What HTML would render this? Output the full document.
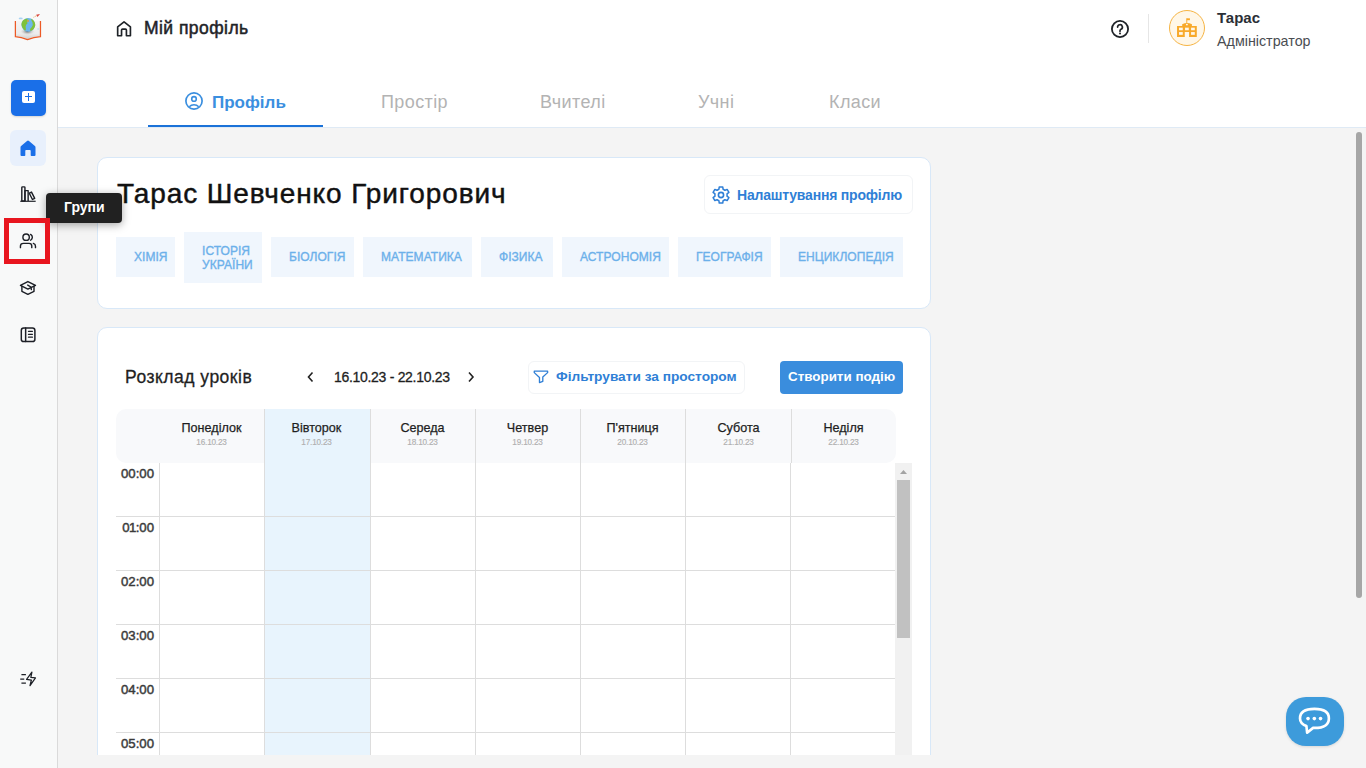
<!DOCTYPE html>
<html><head><meta charset="utf-8">
<style>
*{box-sizing:border-box;margin:0;padding:0}
html,body{width:1366px;height:768px;overflow:hidden}
body{font-family:"Liberation Sans",sans-serif;background:#f4f4f4;position:relative;color:#1f2328}
.a{position:absolute}
.t{position:absolute;white-space:nowrap;line-height:1}
#side{left:0;top:0;width:58px;height:768px;background:#f8f9f9;border-right:1px solid #dadada}
#hdr{left:58px;top:0;width:1308px;height:128px;background:#fff;border-bottom:1px solid #dfeaf5}
.card{background:#fff;border:1px solid #d8e8f8;border-radius:10px}
.tag{position:absolute;background:#f0f6fd;color:#6cb0ea;font-size:12px;letter-spacing:0.05px;font-weight:normal;-webkit-text-stroke:0.35px #6cb0ea;text-transform:uppercase;line-height:14px;padding-left:18px}
.tag span{position:absolute;left:18px;top:50%;transform:translateY(-50%);white-space:nowrap}
.dn{position:absolute;top:422px;font-size:12.6px;-webkit-text-stroke:0.25px #1f1f1f;color:#1f1f1f;line-height:1;text-align:center;width:105px}
.dd{position:absolute;top:439px;font-size:8.2px;-webkit-text-stroke:0.15px #b0b0b0;color:#b0b0b0;line-height:1;text-align:center;width:105px;letter-spacing:-0.2px}
.vl{position:absolute;width:1px;background:#dddddd}
.hl{position:absolute;height:1px;background:#dddddd}
.tm{position:absolute;font-size:13.2px;font-weight:normal;-webkit-text-stroke:0.45px #3a3a3a;color:#3a3a3a;line-height:1;text-align:right;width:60px}
svg{position:absolute;overflow:visible}
</style></head><body>

<!-- sidebar -->
<div id="side" class="a"></div>
<!-- logo -->
<svg style="left:0;top:0" width="60" height="60" viewBox="0 0 768 768">
  <defs><radialGradient id="sh" cx="50%" cy="40%" r="50%"><stop offset="0" stop-color="#666"/><stop offset="1" stop-color="#ddd" stop-opacity="0"/></radialGradient>
  <linearGradient id="pg" x1="0" y1="0" x2="0" y2="1"><stop offset="0" stop-color="#f4f4f4"/><stop offset=".7" stop-color="#ececec"/><stop offset="1" stop-color="#cfcfcf"/></linearGradient></defs>
  <path d="M203 272 L203 462 Q280 468 352 500 Q430 468 512 462 L512 272 Q430 262 352 290 Q280 262 203 272Z" fill="url(#pg)"/>
  <path d="M197 270 L197 470 Q275 478 352 508 Q430 478 518 470 L518 270" fill="none" stroke="#ec5a26" stroke-width="16"/>
  <ellipse cx="352" cy="412" rx="95" ry="48" fill="url(#sh)"/>
  <circle cx="362" cy="318" r="88" fill="#6cb6ec"/>
  <path d="M292 262 Q325 238 355 236 Q338 270 352 300 Q322 318 330 360 Q340 385 320 392 Q282 365 275 320 Q275 285 292 262Z" fill="#7fc23b"/>
  <path d="M398 240 Q448 262 452 322 Q440 378 392 396 Q372 380 405 350 Q430 320 415 285 Q398 262 398 240Z" fill="#7fc23b"/>
  <circle cx="358" cy="268" r="14" fill="#e0a030" opacity=".8"/>
  <path d="M462 190 L512 180 L480 218Z" fill="#d9453a"/>
  <path d="M428 222 L470 200" stroke="#f0b070" stroke-width="12" stroke-dasharray="14 8"/>
  <ellipse cx="265" cy="236" rx="26" ry="11" fill="#a8d4f3"/>
  <circle cx="488" cy="370" r="12" fill="#bfe0f7"/>
</svg>
<!-- add button -->
<div class="a" style="left:11px;top:80px;width:35px;height:36px;border-radius:5px;background:#1a6fe8;box-shadow:0 1px 2px rgba(0,0,0,.15)"></div>
<div class="a" style="left:22px;top:90.5px;width:12.5px;height:12.5px;border-radius:2px;background:#fff"></div>
<div class="a" style="left:27.6px;top:93px;width:1.4px;height:7.5px;background:#1a6fe8"></div>
<div class="a" style="left:24.5px;top:96.05px;width:7.5px;height:1.4px;background:#1a6fe8"></div>
<!-- home active -->
<div class="a" style="left:10px;top:130px;width:36px;height:36px;border-radius:6px;background:#e8f0fc"></div>
<svg style="left:20px;top:140px" width="16" height="16" viewBox="0 0 16 16"><path d="M0.5 7.4 Q0.5 6.6 1.1 6.1 L7 1 Q8 0.2 9 1 L14.9 6.1 Q15.5 6.6 15.5 7.4 L15.5 15 Q15.5 16 14.5 16 L11.5 16 Q10.7 16 10.7 15.2 L10.7 10.8 Q10.7 10 9.9 10 L6.1 10 Q5.3 10 5.3 10.8 L5.3 15.2 Q5.3 16 4.5 16 L1.5 16 Q0.5 16 0.5 15Z" fill="#1a6fe8"/></svg>
<!-- library -->
<svg style="left:14px;top:178px" width="30" height="30" viewBox="0 0 768 768" fill="none" stroke="#1c1f26" stroke-width="36" stroke-linejoin="round">
  <path d="M200 590 L200 245 Q200 228 218 228 L262 228 Q280 228 280 245 L280 590Z"/>
  <path d="M280 590 L280 322 L362 322 L362 590"/>
  <path d="M392 390 L448 360 L530 520 L472 550Z"/>
  <path d="M160 596 L555 596" stroke-width="30"/>
</svg>
<!-- users -->
<svg style="left:14px;top:225px" width="30" height="30" viewBox="0 0 768 768" fill="none" stroke="#1c1f26" stroke-width="36" stroke-linecap="round">
  <circle cx="310" cy="312" r="82"/>
  <path d="M425 240 Q470 270 470 315 Q470 360 425 390"/>
  <path d="M165 580 L165 540 Q165 470 240 470 L385 470 Q455 470 455 540 L455 580"/>
  <path d="M495 470 Q550 490 550 545 L550 580"/>
</svg>
<!-- grad cap -->
<svg style="left:14px;top:273px" width="30" height="30" viewBox="0 0 768 768" fill="none" stroke="#1c1f26" stroke-width="36" stroke-linejoin="round" stroke-linecap="round">
  <path d="M165 318 L355 218 L550 318 L355 412Z"/>
  <path d="M202 345 L202 470 L355 545 L512 470 L512 345"/>
  <path d="M352 310 L432 358 L445 425"/>
</svg>
<!-- book list -->
<svg style="left:14px;top:320px" width="30" height="30" viewBox="0 0 768 768" fill="none" stroke="#1c1f26" stroke-width="38" stroke-linecap="round">
  <rect x="187" y="207" width="348" height="345" rx="62"/>
  <path d="M298 207 L298 552"/>
  <path d="M370 290 L472 290 M370 365 L472 365 M370 440 L472 440" stroke-width="32"/>
</svg>
<!-- lightning -->
<svg style="left:14px;top:664px" width="30" height="30" viewBox="0 0 768 768" fill="none" stroke="#1c1f26" stroke-width="32" stroke-linejoin="round">
  <path d="M190 270 L305 270 M160 385 L262 385 M190 490 L305 490"/>
  <path d="M458 210 L322 395 L445 410 L410 552 L550 358 L432 345Z"/>
</svg>

<!-- header -->
<div id="hdr" class="a"></div>

<!-- breadcrumb -->
<svg style="left:108px;top:13px" width="32" height="32" viewBox="0 0 768 768" fill="none" stroke="#1f2328" stroke-width="40" stroke-linejoin="round">
  <path d="M232 545 L232 335 L385 212 L538 335 L538 545 L442 545 L442 410 Q442 385 418 385 L350 385 Q325 385 325 410 L325 545Z"/>
</svg>
<div class="t" style="left:144px;top:20px;font-size:17.5px;letter-spacing:0.45px;font-weight:normal;-webkit-text-stroke:0.5px #1f2328;color:#1f2328">Мій профіль</div>

<!-- right header -->
<svg style="left:1111px;top:20px" width="18" height="18" viewBox="0 0 18 18"><circle cx="9" cy="9" r="8.1" fill="none" stroke="#1f2328" stroke-width="1.8"/><path d="M6.6 7.1a2.4 2.4 0 1 1 3.4 2.2c-.6.3-1 .8-1 1.5v.5" fill="none" stroke="#1f2328" stroke-width="1.7" stroke-linecap="round"/><circle cx="9" cy="13.5" r="1" fill="#1f2328"/></svg>
<div class="a" style="left:1148px;top:14px;width:1px;height:29px;background:#e6e6e6"></div>
<div class="a" style="left:1169px;top:10px;width:36px;height:36px;border-radius:50%;background:#fff7e8;border:1px solid #f6b443"></div>
<svg style="left:1165px;top:6px" width="44" height="44" viewBox="0 0 768 768">
  <path d="M210 350 L300 350 L300 320 Q385 270 470 320 L470 350 L555 350 L555 540 L420 540 L420 455 L345 455 L345 540 L210 540Z" fill="#f8a92a"/>
  <path d="M380 300 L380 215" stroke="#f8a92a" stroke-width="16"/>
  <path d="M380 215 L435 215 L435 248 L380 248Z" fill="#f8a92a"/>
  <g fill="#fff7e8"><rect x="245" y="378" width="65" height="45"/><rect x="350" y="378" width="65" height="45"/><rect x="455" y="378" width="65" height="45"/><rect x="245" y="455" width="65" height="48"/><rect x="455" y="455" width="65" height="48"/><rect x="366" y="312" width="32" height="24"/></g>
</svg>
<div class="t" style="left:1217px;top:10px;font-size:15px;font-weight:bold;color:#2b2f36">Тарас</div>
<div class="t" style="left:1217px;top:34px;font-size:14.3px;color:#4a4d52">Адміністратор</div>

<!-- tabs -->
<svg style="left:185px;top:92px" width="18" height="18" viewBox="0 0 18 18"><circle cx="9" cy="9" r="8.1" fill="none" stroke="#3b8fdf" stroke-width="1.7"/><circle cx="9" cy="6.9" r="2.3" fill="none" stroke="#3b8fdf" stroke-width="1.6"/><path d="M4.3 14.8c1.3-1.4 2.9-2 4.7-2s3.4.6 4.7 2" fill="none" stroke="#3b8fdf" stroke-width="1.6"/></svg>
<div class="t" style="left:212px;top:94px;font-size:17px;font-weight:bold;color:#3b8fdf">Профіль</div>
<div class="a" style="left:148px;top:125px;width:175px;height:2px;background:#1b72d8"></div>
<div class="t" style="left:381px;top:93px;font-size:18px;letter-spacing:0.4px;color:#b3b3b3">Простір</div>
<div class="t" style="left:540px;top:93px;font-size:18px;letter-spacing:0.4px;color:#b3b3b3">Вчителі</div>
<div class="t" style="left:698px;top:93px;font-size:18px;letter-spacing:0.4px;color:#b3b3b3">Учні</div>
<div class="t" style="left:829px;top:93px;font-size:18px;letter-spacing:0.4px;color:#b3b3b3">Класи</div>

<!-- card 1 -->
<div class="a card" style="left:97px;top:157px;width:834px;height:152px"></div>
<div class="t" style="left:117px;top:179.5px;font-size:28px;letter-spacing:0.9px;-webkit-text-stroke:0.45px #111;color:#111">Тарас Шевченко Григорович</div>
<div class="a" style="left:704px;top:175px;width:209px;height:39px;border:1px solid #f2f4f6;border-radius:6px"></div>
<svg style="left:709px;top:183px" width="24" height="24" viewBox="0 0 24 24" fill="none" stroke="#2f7fd6" stroke-width="1.5" stroke-linejoin="round"><path d="M9.90 6.27 L10.25 3.89 L13.75 3.89 L14.10 6.27 A6.10 6.10 0 0 1 15.91 7.32 L18.15 6.43 L19.90 9.46 L18.01 10.96 A6.10 6.10 0 0 1 18.01 13.04 L19.90 14.54 L18.15 17.57 L15.91 16.68 A6.10 6.10 0 0 1 14.10 17.73 L13.75 20.11 L10.25 20.11 L9.90 17.73 A6.10 6.10 0 0 1 8.09 16.68 L5.85 17.57 L4.10 14.54 L5.99 13.04 A6.10 6.10 0 0 1 5.99 10.96 L4.10 9.46 L5.85 6.43 L8.09 7.32 A6.10 6.10 0 0 1 9.90 6.27 Z"/><circle cx="12" cy="12" r="2.6" stroke-width="1.6"/></svg>
<div class="t" style="left:737px;top:188px;font-size:14px;letter-spacing:-0.2px;font-weight:bold;color:#2f7fd6">Налаштування профілю</div>

<div class="tag" style="left:116px;top:237px;width:59px;height:40px"><span>Хімія</span></div>
<div class="tag" style="left:184px;top:232px;width:78px;height:51px"><span>Історія<br>України</span></div>
<div class="tag" style="left:271px;top:237px;width:83px;height:40px"><span>Біологія</span></div>
<div class="tag" style="left:363px;top:237px;width:109px;height:40px"><span>Математика</span></div>
<div class="tag" style="left:481px;top:237px;width:72px;height:40px"><span>Фізика</span></div>
<div class="tag" style="left:562px;top:237px;width:107px;height:40px"><span>Астрономія</span></div>
<div class="tag" style="left:678px;top:237px;width:93px;height:40px"><span>Географія</span></div>
<div class="tag" style="left:780px;top:237px;width:123px;height:40px"><span>Енциклопедія</span></div>

<!-- card 2 -->
<div class="a card" style="left:97px;top:327px;width:834px;height:470px"></div>
<div class="t" style="left:125px;top:369px;font-size:17.5px;letter-spacing:0.5px;-webkit-text-stroke:0.3px #1f1f1f;color:#1f1f1f">Розклад уроків</div>
<svg style="left:306px;top:371px" width="10" height="12" viewBox="0 0 10 12" fill="none" stroke="#222" stroke-width="1.6"><path d="M6.5 1.5 L2.5 6 L6.5 10.5"/></svg>
<div class="t" style="left:334px;top:370px;font-size:14px;letter-spacing:-0.3px;-webkit-text-stroke:0.3px #1f1f1f;color:#1f1f1f">16.10.23 - 22.10.23</div>
<svg style="left:466px;top:371px" width="10" height="12" viewBox="0 0 10 12" fill="none" stroke="#222" stroke-width="1.6"><path d="M3 1.5 L7 6 L3 10.5"/></svg>

<div class="a" style="left:528px;top:361px;width:217px;height:33px;border:1px solid #f2f4f6;border-radius:6px"></div>
<svg style="left:526px;top:362px" width="30" height="30" viewBox="0 0 768 768" fill="none" stroke="#2f7fd6" stroke-width="34" stroke-linejoin="round"><path d="M212 232 L553 232 L553 272 L430 385 L430 495 L345 527 L345 395 L212 272Z"/></svg>
<div class="t" style="left:556px;top:370px;font-size:13.7px;font-weight:bold;color:#2f7fd6">Фільтрувати за простором</div>
<div class="a" style="left:780px;top:361px;width:123px;height:33px;background:#3a8ddd;border-radius:4px"></div>
<div class="t" style="left:788px;top:370px;font-size:13.4px;font-weight:bold;color:#fff">Створити подію</div>

<!-- calendar -->
<div class="a" style="left:116px;top:409px;width:780px;height:54px;background:#f8f9fb;border-radius:10px"></div>
<div class="a" style="left:264px;top:409px;width:106px;height:346px;background:#e8f4fd"></div>
<div class="a" style="left:116px;top:463px;width:780px;height:292px;background:transparent"></div>
<!-- header separators -->
<div class="vl" style="left:264px;top:409px;height:346px"></div>
<div class="vl" style="left:370px;top:409px;height:346px"></div>
<div class="vl" style="left:475px;top:409px;height:346px"></div>
<div class="vl" style="left:580px;top:409px;height:346px"></div>
<div class="vl" style="left:685px;top:409px;height:346px"></div>
<div class="vl" style="left:791px;top:409px;height:54px"></div><div class="vl" style="left:790px;top:463px;height:292px"></div>
<div class="vl" style="left:159px;top:463px;height:292px"></div>
<div class="hl" style="left:116px;top:516px;width:780px"></div>
<div class="hl" style="left:116px;top:570px;width:780px"></div>
<div class="hl" style="left:116px;top:624px;width:780px"></div>
<div class="hl" style="left:116px;top:678px;width:780px"></div>
<div class="hl" style="left:116px;top:732px;width:780px"></div>

<div class="dn" style="left:159px">Понеділок</div><div class="dd" style="left:159px">16.10.23</div>
<div class="dn" style="left:264px">Вівторок</div><div class="dd" style="left:264px">17.10.23</div>
<div class="dn" style="left:370px">Середа</div><div class="dd" style="left:370px">18.10.23</div>
<div class="dn" style="left:475px">Четвер</div><div class="dd" style="left:475px">19.10.23</div>
<div class="dn" style="left:580px">П'ятниця</div><div class="dd" style="left:580px">20.10.23</div>
<div class="dn" style="left:686px">Субота</div><div class="dd" style="left:686px">21.10.23</div>
<div class="dn" style="left:791px">Неділя</div><div class="dd" style="left:791px">22.10.23</div>

<div class="tm" style="left:94px;top:467px">00:00</div>
<div class="tm" style="left:94px;top:521px"><span style="letter-spacing:-0.6px">0</span><span style="letter-spacing:-0.6px">1</span>:00</div>
<div class="tm" style="left:94px;top:575px">02:00</div>
<div class="tm" style="left:94px;top:629px">03:00</div>
<div class="tm" style="left:94px;top:683px">04:00</div>
<div class="tm" style="left:94px;top:737px">05:00</div>

<!-- inner scrollbar -->
<div class="a" style="left:895px;top:463px;width:17px;height:292px;background:#f1f1f1"></div>
<div class="a" style="left:897px;top:480px;width:13px;height:158px;background:#c1c1c1"></div>
<svg style="left:895px;top:464px" width="17" height="17" viewBox="0 0 17 17"><path d="M5 10 L8.5 6 L12 10Z" fill="#a3a3a3"/></svg>

<!-- bottom clip -->
<div class="a" style="left:58px;top:755px;width:1308px;height:13px;background:#f4f4f4"></div>

<!-- page scrollbar -->
<div class="a" style="left:1356px;top:132px;width:6px;height:466px;border-radius:3px;background:#a6a6a6"></div>

<!-- chat button -->
<div class="a" style="left:1286px;top:697px;width:58px;height:49px;border-radius:20px;background:#3d9bdb;box-shadow:0 1px 3px rgba(0,0,0,.12)"></div>
<svg style="left:1270px;top:680px" width="96" height="88" viewBox="0 0 838 768" fill="none" stroke="#fff" stroke-width="26" stroke-linejoin="round">
  <path d="M318 402 Q262 378 262 335 Q262 252 388 252 Q514 252 514 335 Q514 418 388 418 L376 418 L324 460 Z" stroke-width="23"/>
  <circle cx="332" cy="337" r="16" fill="#fff" stroke="none"/><circle cx="387" cy="337" r="16" fill="#fff" stroke="none"/><circle cx="441" cy="337" r="16" fill="#fff" stroke="none"/>
</svg>

<!-- tooltip -->
<div class="a" style="left:46px;top:193px;width:76px;height:30px;background:#212121;border-radius:4px;box-shadow:0 2px 8px rgba(0,0,0,.35)"></div>
<div class="t" style="left:64px;top:200px;font-size:14px;font-weight:bold;color:#fff">Групи</div>
<!-- red box -->
<div class="a" style="left:4px;top:218px;width:46px;height:46px;border:5px solid #e8161f"></div>

</body></html>
